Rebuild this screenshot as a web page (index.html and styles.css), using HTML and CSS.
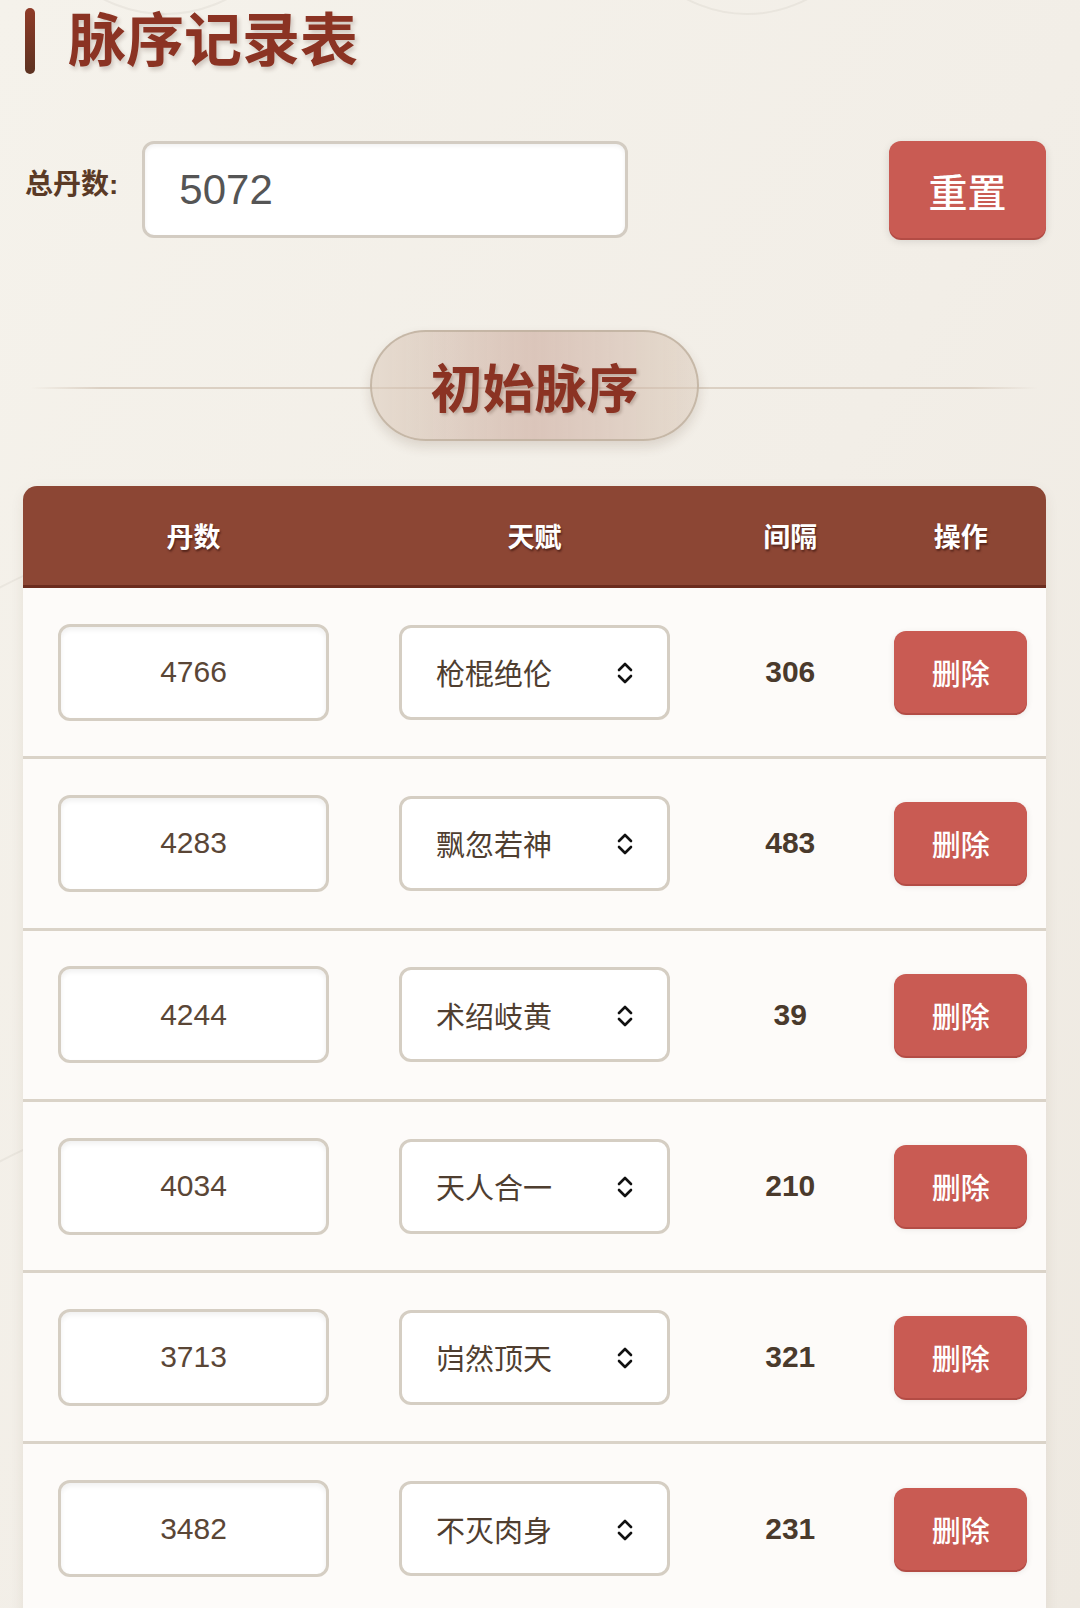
FILE: index.html
```html
<!DOCTYPE html>
<html lang="zh-CN">
<head>
<meta charset="utf-8">
<title>脉序记录表</title>
<link rel="stylesheet" href="styles.css">
</head>
<body>
<div class="deco deco-a"></div>
<div class="deco deco-b"></div>
<div class="deco deco-c"></div>
<div class="deco deco-d"></div>
<main class="page">
  <header class="title-row">
    <span class="accent"></span>
    <h1 class="title">脉序记录表</h1>
  </header>

  <section class="controls">
    <label class="total-label">总丹数:</label>
    <div class="total-input">5072</div>
    <button class="btn reset-btn">重置</button>
  </section>

  <section class="section-head">
    <div class="pill">初始脉序</div>
  </section>

  <section class="table">
    <div class="thead">
      <div class="th">丹数</div>
      <div class="th">天赋</div>
      <div class="th">间隔</div>
      <div class="th">操作</div>
    </div>

    <div class="row">
      <div class="cell"><div class="num-input">4766</div></div>
      <div class="cell"><div class="select"><span>枪棍绝伦</span><svg class="chev" viewBox="0 0 16 22" width="16" height="22"><path d="M2 8 L8 2 L14 8 M2 14 L8 20 L14 14" fill="none" stroke="#111" stroke-width="2.6" stroke-linecap="round" stroke-linejoin="round"/></svg></div></div>
      <div class="cell gap-val">306</div>
      <div class="cell"><button class="btn del-btn">删除</button></div>
    </div>

    <div class="row">
      <div class="cell"><div class="num-input">4283</div></div>
      <div class="cell"><div class="select"><span>飘忽若神</span><svg class="chev" viewBox="0 0 16 22" width="16" height="22"><path d="M2 8 L8 2 L14 8 M2 14 L8 20 L14 14" fill="none" stroke="#111" stroke-width="2.6" stroke-linecap="round" stroke-linejoin="round"/></svg></div></div>
      <div class="cell gap-val">483</div>
      <div class="cell"><button class="btn del-btn">删除</button></div>
    </div>

    <div class="row">
      <div class="cell"><div class="num-input">4244</div></div>
      <div class="cell"><div class="select"><span>术绍岐黄</span><svg class="chev" viewBox="0 0 16 22" width="16" height="22"><path d="M2 8 L8 2 L14 8 M2 14 L8 20 L14 14" fill="none" stroke="#111" stroke-width="2.6" stroke-linecap="round" stroke-linejoin="round"/></svg></div></div>
      <div class="cell gap-val">39</div>
      <div class="cell"><button class="btn del-btn">删除</button></div>
    </div>

    <div class="row">
      <div class="cell"><div class="num-input">4034</div></div>
      <div class="cell"><div class="select"><span>天人合一</span><svg class="chev" viewBox="0 0 16 22" width="16" height="22"><path d="M2 8 L8 2 L14 8 M2 14 L8 20 L14 14" fill="none" stroke="#111" stroke-width="2.6" stroke-linecap="round" stroke-linejoin="round"/></svg></div></div>
      <div class="cell gap-val">210</div>
      <div class="cell"><button class="btn del-btn">删除</button></div>
    </div>

    <div class="row">
      <div class="cell"><div class="num-input">3713</div></div>
      <div class="cell"><div class="select"><span>岿然顶天</span><svg class="chev" viewBox="0 0 16 22" width="16" height="22"><path d="M2 8 L8 2 L14 8 M2 14 L8 20 L14 14" fill="none" stroke="#111" stroke-width="2.6" stroke-linecap="round" stroke-linejoin="round"/></svg></div></div>
      <div class="cell gap-val">321</div>
      <div class="cell"><button class="btn del-btn">删除</button></div>
    </div>

    <div class="row">
      <div class="cell"><div class="num-input">3482</div></div>
      <div class="cell"><div class="select"><span>不灭肉身</span><svg class="chev" viewBox="0 0 16 22" width="16" height="22"><path d="M2 8 L8 2 L14 8 M2 14 L8 20 L14 14" fill="none" stroke="#111" stroke-width="2.6" stroke-linecap="round" stroke-linejoin="round"/></svg></div></div>
      <div class="cell gap-val">231</div>
      <div class="cell"><button class="btn del-btn">删除</button></div>
    </div>
  </section>
</main>
</body>
</html>
```

FILE: styles.css
```css
* { box-sizing: border-box; }

html, body {
  margin: 0;
  padding: 0;
}

body {
  font-family: "Liberation Sans", "Noto Sans CJK SC", sans-serif;
  background: linear-gradient(120deg, #f5f2eb 0%, #f2eee7 55%, #eee9e1 100%);
  height: 1608px;
  overflow: hidden;
  position: relative;
  color: #4a3a2c;
}

.deco {
  position: absolute;
  border-radius: 50%;
  border: 2px solid rgba(120, 100, 80, 0.07);
  pointer-events: none;
}
.deco-a { width: 272px; height: 272px; left: 29px; top: -257px; }
.deco-b { width: 260px; height: 260px; left: 617px; top: -245px; }
.deco-c { width: 1200px; height: 1200px; left: -322px; top: 518px; }
.deco-d { width: 1200px; height: 1200px; left: -320px; top: 1091px; }

.page {
  position: relative;
  padding: 8px 34px 0 23px;
}

/* Title */
.title-row {
  display: flex;
  align-items: center;
  height: 66px;
}
.accent {
  width: 10px;
  height: 66px;
  border-radius: 5px;
  background: linear-gradient(180deg, #8f3b28 0%, #5c3221 100%);
  margin-left: 2px;
}
.title {
  margin: 0 0 0 33px;
  font-size: 58px;
  line-height: 66px;
  font-weight: 700;
  color: #8b3323;
  letter-spacing: 0;
  text-shadow: 2px 3px 4px rgba(60, 30, 20, 0.2);
}

/* Controls */
.controls {
  display: flex;
  align-items: center;
  margin-top: 67px;
  height: 97px;
}
.total-label {
  font-size: 28px;
  font-weight: 700;
  color: #5a3a26;
  margin: 0 24px 16px 2px;
}
.total-input {
  width: 486px;
  height: 97px;
  background: #fff;
  border: 3px solid #d3ccc2;
  border-radius: 12px;
  box-shadow: inset 0 2px 4px rgba(0, 0, 0, 0.06);
  font-size: 42px;
  color: #555;
  padding-left: 34px;
  display: flex;
  align-items: center;
}
.btn {
  font-family: "Liberation Sans", "Noto Sans CJK SC", sans-serif;
  border: none;
  color: #fff;
  background: #c95b53;
  cursor: pointer;
  display: flex;
  align-items: center;
  justify-content: center;
  padding: 0;
}
.reset-btn {
  margin-left: auto;
  width: 157px;
  height: 97px;
  border-radius: 12px;
  font-size: 39px;
  font-weight: 500;
  box-shadow: 0 2px 0 #b34c45, 0 3px 8px rgba(0, 0, 0, 0.12);
}

/* Section head */
.section-head {
  position: relative;
  display: flex;
  justify-content: center;
  margin-top: 92px;
}
.section-head::before {
  content: "";
  position: absolute;
  left: 8px;
  right: 8px;
  top: 57px;
  height: 2px;
  background: linear-gradient(90deg, rgba(210, 198, 184, 0) 0%, #dbd0c3 7%, #dbd0c3 93%, rgba(210, 198, 184, 0) 100%);
}
.pill {
  position: relative;
  width: 329px;
  height: 111px;
  border-radius: 56px;
  border: 2px solid rgba(190, 175, 158, 0.8);
  background: linear-gradient(90deg, rgba(218, 202, 186, 0.55) 0%, rgba(195, 155, 140, 0.5) 50%, rgba(218, 202, 186, 0.55) 100%);
  box-shadow: 0 6px 12px rgba(80, 50, 30, 0.14);
  display: flex;
  align-items: center;
  justify-content: center;
  font-size: 52px;
  font-weight: 700;
  color: #8b3323;
  text-shadow: 2px 2px 3px rgba(60, 30, 20, 0.22);
}

/* Table */
.table {
  margin-top: 45px;
  border-radius: 14px 14px 0 0;
  overflow: hidden;
  box-shadow: 0 4px 14px rgba(80, 50, 30, 0.08);
}
.thead {
  display: grid;
  grid-template-columns: 2fr 2fr 1fr 1fr;
  height: 102px;
  background: #8c4634;
  border-bottom: 3px solid #6b2c1e;
}
.th {
  display: flex;
  align-items: center;
  justify-content: center;
  color: #fff;
  font-size: 27px;
  font-weight: 700;
  text-shadow: 1px 2px 2px rgba(40, 10, 5, 0.55);
}
.row {
  display: grid;
  grid-template-columns: 2fr 2fr 1fr 1fr;
  height: 171.3px;
  background: #fdfbf9;
  border-bottom: 3px solid #dad3c8;
}
.row:first-of-type { height: 173px; }
.cell {
  display: flex;
  align-items: center;
  justify-content: center;
  padding: 0 35px;
  min-width: 0;
}
.num-input {
  width: 100%;
  height: 97px;
  background: #fff;
  border: 3px solid #d5cec3;
  border-radius: 12px;
  box-shadow: inset 0 3px 5px rgba(0, 0, 0, 0.06);
  display: flex;
  align-items: center;
  justify-content: center;
  font-size: 30px;
  color: #5a4636;
}
.select {
  width: 100%;
  height: 95px;
  background: #fff;
  border: 3px solid #d5cec3;
  border-radius: 12px;
  display: flex;
  align-items: center;
  justify-content: space-between;
  padding: 0 34px;
  font-size: 29px;
  color: #4f3e30;
}
.chev { display: block; margin-top: 2px; }
.gap-val {
  font-size: 30px;
  font-weight: 700;
  color: #4a3a2c;
  padding: 0;
}
.row .cell:last-child { padding: 0; }
.del-btn {
  width: 133px;
  height: 82px;
  border-radius: 12px;
  font-size: 29px;
  font-weight: 500;
  box-shadow: 0 2px 0 #b34c45, 0 2px 6px rgba(0, 0, 0, 0.1);
}
```
